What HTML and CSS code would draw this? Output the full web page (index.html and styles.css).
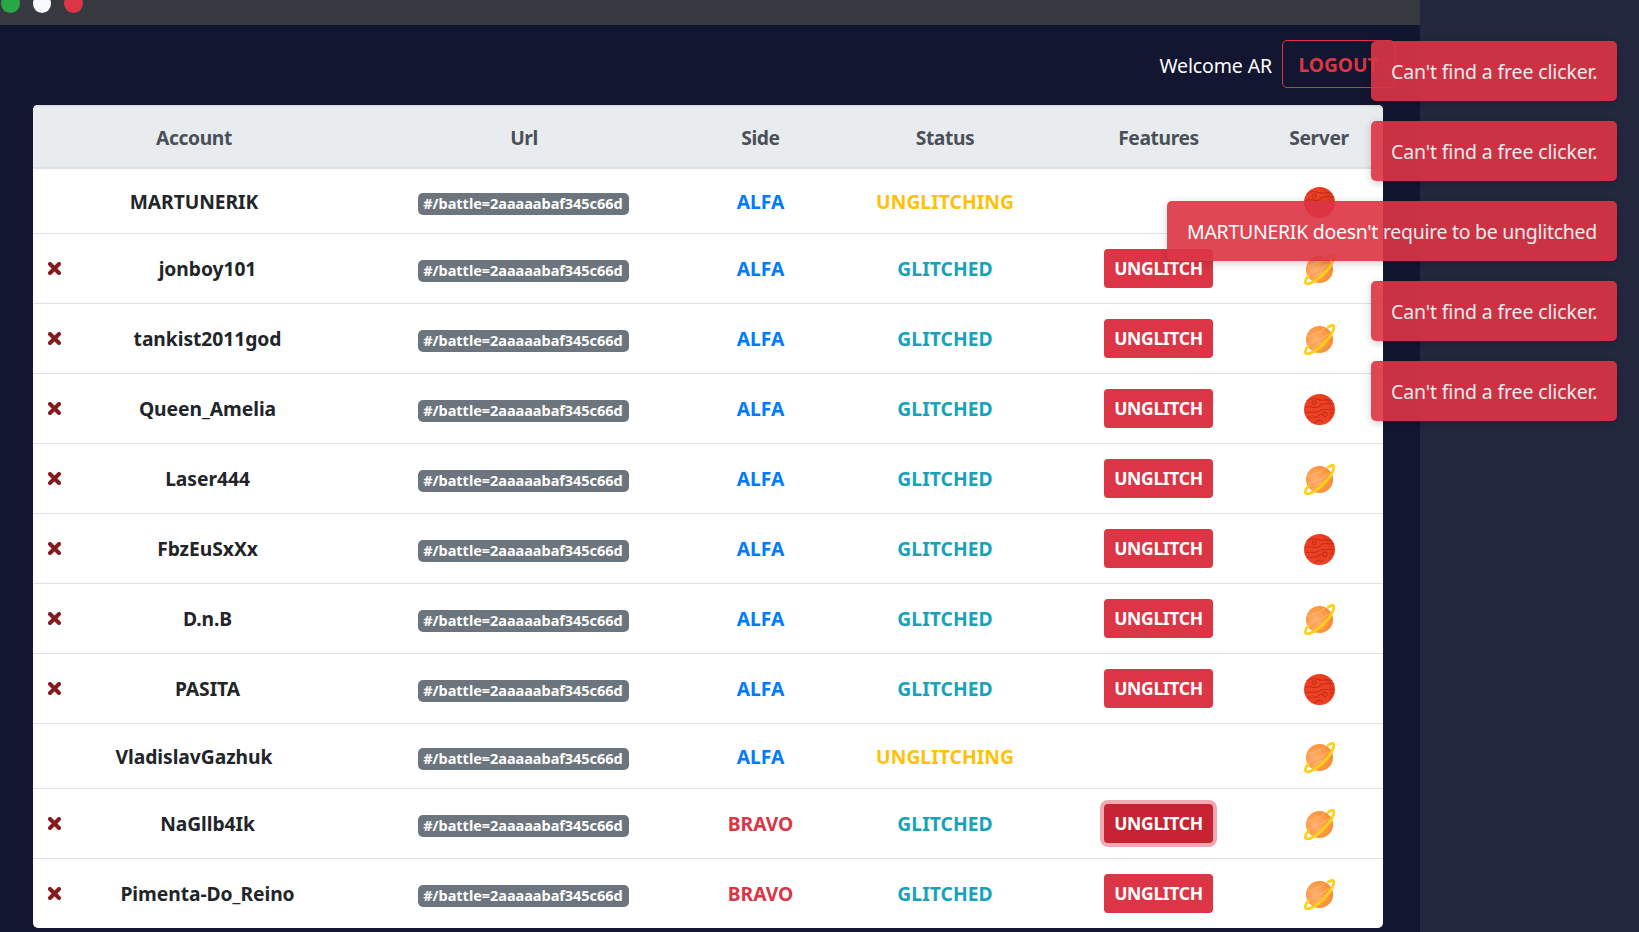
FILE: index.html
```
<!DOCTYPE html>
<html lang="en">
<head>
<meta charset="utf-8">
<title>Accounts</title>
<link rel="stylesheet" href="styles.css">
</head>
<body>
<svg class="defs" aria-hidden="true">
  <defs>
    <radialGradient id="gold" cx=".35" cy=".5" r=".65"><stop offset="0" stop-color="#ffb070"/><stop offset=".6" stop-color="#fb9a45"/><stop offset="1" stop-color="#f98a33"/></radialGradient>
    <symbol id="saturn" viewBox="0 0 32 32">
      <circle cx="16" cy="16" r="14" fill="url(#gold)"/>
      <path d="M3 12c5 2 7-3 11-3s5-4 8-5M4 20c5 2 6-4 11-4s7-5 11-6M8 26c4-1 5-5 9-6s8-3 11-7" fill="none" stroke="#ffb878" stroke-width="1.6" opacity=".6"/>
      <path d="M25 3.200C28 1 31.500 .2 30.800 4C30 10 22 20 14 26C9 30 2 32.500 1.500 29.500C1 27.500 3 24.500 4.500 23" fill="none" stroke="#fdd117" stroke-width="2.900" stroke-linecap="round"/>
    </symbol>
    <symbol id="mars" viewBox="0 0 32 32">
      <circle cx="16" cy="16" r="16" fill="#ee4023"/>
      <path d="M16 0A16 16 0 0 1 23 30C28 24 30 12 16 0" fill="#d93417" opacity=".5"/>
      <g fill="none" stroke="#c5311a" stroke-width="1.200">
        <circle cx="10.500" cy="9" r="1.900"/>
        <path d="M3 7C8 3 12 5 16 6s9-1 13 1M1 14c6-2 8 0 12 0s4-4 8-4h10M1 19h10c5 0 5-3 9-3h11M3 24h8c4 0 5-4 8-3M27 20c2 0 2 0 4-1M11 30c2-3 6-4 9-1"/>
        <circle cx="21.500" cy="21" r="2.300"/>
      </g>
    </symbol>
    <symbol id="times" viewBox="0 0 13 13"><path d="M2 2L11 11M11 2L2 11" stroke="#861a1c" stroke-width="4" stroke-linecap="round"/></symbol>
  </defs>
</svg>
<div class="window">
  <header class="titlebar"><i class="dot green"></i><i class="dot white"></i><i class="dot red"></i></header>
  <nav class="userbar"><span class="welcome">Welcome AR</span><button class="logout"><span>LOGOUT</span></button></nav>
  <main class="table" id="table">
    <div class="row head"><span class="acc">Account</span><span class="url">Url</span><span class="side">Side</span><span class="st">Status</span><span class="ft">Features</span><span class="srv">Server</span></div>
  </main>
</div>
<div class="toasts">
  <div class="toast"><span>Can't find a free clicker.</span></div>
  <div class="toast"><span>Can't find a free clicker.</span></div>
  <div class="toast wide"><span>MARTUNERIK doesn't require to be unglitched</span></div>
  <div class="toast"><span>Can't find a free clicker.</span></div>
  <div class="toast"><span>Can't find a free clicker.</span></div>
</div>
<script src="app.js"></script>
</body>
</html>
```
FILE: styles.css
```
* { box-sizing: border-box; }
body { margin: 0; width: 1639px; height: 932px; overflow: hidden; background: #23283f; font: 19.5px/30px "Noto Sans", "Open Sans", sans-serif; color: #212529; }
.defs { position: absolute; width: 0; height: 0; }
.window { width: 1420px; height: 932px; background: #121630; }
.titlebar { height: 25px; background: #363a40; display: flex; gap: 13px; padding-left: 1px; overflow: hidden; }
.dot { width: 19px; height: 19px; border-radius: 50%; margin-top: -6px; }
.green { background: #28a745; }
.white { width: 18px; background: #f8f9fa; }
.red { background: #dc3545; }
.userbar { height: 80px; display: flex; justify-content: flex-end; padding: 15px 25px 0 0; gap: 10px; color: #fff; }
.welcome { line-height: 52px; white-space: nowrap; letter-spacing: -.12px; }
.logout { width: 113px; height: 48px; border: 1px solid #dc3545; border-radius: 5px; background: none; color: #dc3545; font: 700 19.25px/30px "Noto Sans", sans-serif; letter-spacing: -.05px; padding: 2px 0 0; white-space: nowrap; }
.table { margin-left: 33px; width: 1350px; background: #fff; border-radius: 5px; overflow: hidden; }
.row { height: 70px; border-top: 1px solid #dee2e6; display: grid; grid-template-columns: 27px 295px 338px 135px 234px 193px 128px; align-items: center; justify-items: center; font-size: 19.25px; font-weight: 700; letter-spacing: -.05px; white-space: nowrap; }
.row.head { height: 64px; border: solid #dee2e6; border-width: 2px 0; padding-top: 2px; background: #e9ecef; color: #495057; letter-spacing: -.4px; }
.head .acc, .busy .name { grid-column: 1 / 3; }
.row.busy { height: 65px; padding-top: 1px; }
.row.first { height: 64px; border-top: 0; }
.remove { width: 13px; height: 13px; margin: 0 0 0 15px; }
.badge { margin: 4px 2px 0 0; width: 211px; height: 22px; border-radius: 5px; background: #6c757d; color: #fff; font-size: 14.5px; line-height: 21px; letter-spacing: -.04px; text-align: center; }
.alfa { color: #007bff; }
.bravo { color: #dc3545; }
.glitched, .unglitching { letter-spacing: .05px; }
.glitched { color: #17a2b8; }
.unglitching { color: #ffc107; }
.btn { width: 109px; height: 39px; border: 0; border-radius: 4px; padding: 0; background: #dc3545; color: #fff; font: 700 17.5px/36px "Noto Sans", sans-serif; letter-spacing: -.3px; }
.btn span { display: block; margin-top: -2px; }
.btn.active { background: #c82333; box-shadow: 0 0 0 4px #f1aab2; }
.planet { width: 31px; height: 31px; margin-top: 2px; }
.busy .planet { margin-top: 1px; }
.toasts { position: absolute; top: 41px; right: 22px; display: flex; flex-direction: column; align-items: flex-end; gap: 20px; }
.toast { width: 246px; height: 60px; padding: 16px 0 0 20px; border-radius: 5px; background: #dc3545; opacity: .91; color: #fff; letter-spacing: -.15px; box-shadow: 0 2px 8px rgba(0,0,0,.2); white-space: nowrap; }
.toast.wide { width: 450px; letter-spacing: -.29px; }
```
FILE: app.js
```
const accounts = [
  ["MARTUNERIK", "ALFA", "UNGLITCHING", "mars"],
  ["jonboy101", "ALFA", "GLITCHED", "saturn"],
  ["tankist2011god", "ALFA", "GLITCHED", "saturn"],
  ["Queen_Amelia", "ALFA", "GLITCHED", "mars"],
  ["Laser444", "ALFA", "GLITCHED", "saturn"],
  ["FbzEuSxXx", "ALFA", "GLITCHED", "mars"],
  ["D.n.B", "ALFA", "GLITCHED", "saturn"],
  ["PASITA", "ALFA", "GLITCHED", "mars"],
  ["VladislavGazhuk", "ALFA", "UNGLITCHING", "saturn"],
  ["NaGllb4Ik", "BRAVO", "GLITCHED", "saturn"],
  ["Pimenta-Do_Reino", "BRAVO", "GLITCHED", "saturn"]
];
document.getElementById("table").insertAdjacentHTML("beforeend", accounts.map(([name, side, status, planet], i) => {
  const busy = status === "UNGLITCHING";
  return `<div class="row ${busy ? "busy" : ""} ${i === 0 ? "first" : ""}">
    ${busy ? "" : '<svg class="remove"><use href="#times"/></svg>'}
    <span class="name">${name}</span>
    <span class="badge"><span>#/battle=2aaaaabaf345c66d</span></span>
    <span class="${side.toLowerCase()}">${side}</span>
    <span class="${status.toLowerCase()}">${status}</span>
    ${busy ? "<i></i>" : `<button class="btn ${i === 9 ? "active" : ""}"><span>UNGLITCH</span></button>`}
    <svg class="planet"><use href="#${planet}"/></svg>
  </div>`;
}).join(""));
```
